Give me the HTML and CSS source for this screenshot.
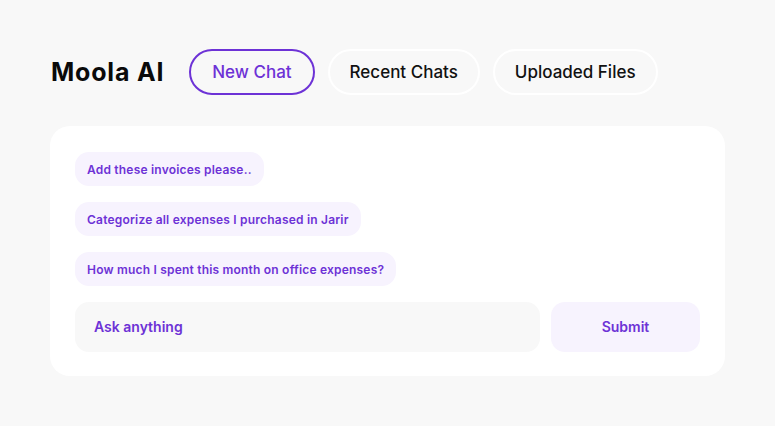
FILE: index.html
```html
<!DOCTYPE html>
<html>
<head>
<meta charset="utf-8">
<link rel="stylesheet" href="styles.css">
</head>
<body>
<div class="page">
  <header class="header">
    <h1 class="brand">Moola AI</h1>
    <nav class="tabs">
      <button class="tab tab-active">New Chat</button>
      <button class="tab">Recent Chats</button>
      <button class="tab">Uploaded Files</button>
    </nav>
  </header>
  <main class="card">
    <div class="chips">
      <span class="chip">Add these invoices please..</span>
      <span class="chip">Categorize all expenses I purchased in Jarir</span>
      <span class="chip">How much I spent this month on office expenses?</span>
    </div>
    <div class="ask-row">
      <div class="ask-input">Ask anything</div>
      <button class="submit">Submit</button>
    </div>
  </main>
</div>
</body>
</html>
```
FILE: styles.css
```css
* { box-sizing: border-box; }
html, body { margin: 0; padding: 0; }
body {
  background: #f8f8f8;
  font-family: Inter, "Noto Sans", sans-serif;
  width: 775px;
  height: 426px;
  overflow: hidden;
}
.page {
  padding: 49px 50px 0 50px;
}
.header {
  display: flex;
  align-items: center;
  height: 46px;
}
.brand {
  margin: 0 25px 0 1px;
  font-size: 25px;
  font-weight: 700;
  color: #0a0a0a;
  letter-spacing: 0.8px;
}
.tabs {
  display: flex;
  gap: 13px;
}
.tab {
  height: 46px;
  border: 2px solid #ffffff;
  border-radius: 23px;
  background: transparent;
  font-family: Inter, sans-serif;
  font-size: 17px;
  font-weight: 500;
  color: #111111;
  padding: 0 20px;
}
.tab-active {
  border-color: #6d32d6;
  color: #6d32d6;
  padding: 0 21px;
}
.card {
  margin-top: 31px;
  width: 675px;
  background: #ffffff;
  border-radius: 20px;
  padding: 26px 25px 24px 25px;
}
.chips {
  display: flex;
  flex-direction: column;
  align-items: flex-start;
  gap: 16px;
}
.chip {
  display: inline-flex;
  align-items: center;
  height: 34px;
  padding: 0 12px;
  background: #f7f3fe;
  border-radius: 14px;
  font-size: 12px;
  font-weight: 600;
  letter-spacing: 0.2px;
  color: #6d32d6;
}
.ask-row {
  display: flex;
  gap: 11px;
  margin-top: 16px;
}
.ask-input {
  flex: 1;
  height: 50px;
  background: #f8f8f8;
  border-radius: 14px;
  display: flex;
  align-items: center;
  padding-left: 19px;
  padding-bottom: 2px;
  font-size: 14px;
  font-weight: 600;
  color: #6d32d6;
}
.submit {
  width: 149px;
  height: 50px;
  border: none;
  background: #f7f3fe;
  border-radius: 14px;
  font-family: Inter, sans-serif;
  font-size: 14px;
  font-weight: 600;
  color: #6d32d6;
  padding-bottom: 2px;
}
```
